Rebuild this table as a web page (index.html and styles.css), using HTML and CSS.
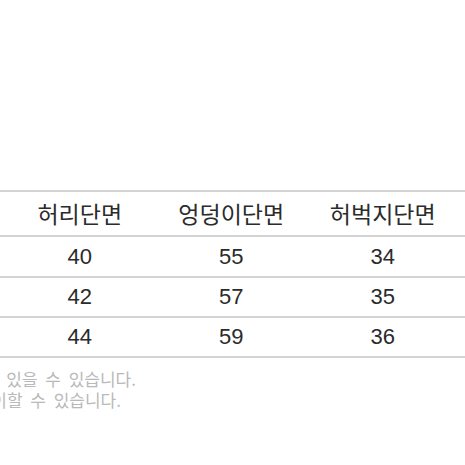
FILE: index.html
```html
<!DOCTYPE html>
<html lang="ko">
<head>
<meta charset="utf-8">
<title>사이즈표</title>
<link rel="stylesheet" href="styles.css">
</head>
<body>
<div class="page">
  <div class="size-table">
    <div class="row head">
      <div class="cell">허리단면</div>
      <div class="cell">엉덩이단면</div>
      <div class="cell">허벅지단면</div>
    </div>
    <div class="row data first">
      <div class="cell">40</div>
      <div class="cell">55</div>
      <div class="cell">34</div>
    </div>
    <div class="row data">
      <div class="cell">42</div>
      <div class="cell">57</div>
      <div class="cell">35</div>
    </div>
    <div class="row data last">
      <div class="cell">44</div>
      <div class="cell">59</div>
      <div class="cell">36</div>
    </div>
  </div>
  <div class="notes">
    <div class="note n1"><span>측정 방법에 따라 1~3cm 오차가 있을 수 있습니다.</span></div>
    <div class="note n2"><span>모니터 환경에 따라 색상이 상이할 수 있습니다.</span></div>
  </div>
</div>
</body>
</html>
```

FILE: styles.css
```css
html, body {
  margin: 0;
  padding: 0;
  background: #ffffff;
  overflow: hidden;
}

.page {
  width: 465px;
  height: 465px;
  overflow: hidden;
  font-family: "Liberation Sans", "Noto Sans CJK KR", sans-serif;
}

.size-table {
  margin-top: 190px;
}

.row {
  display: grid;
  grid-template-columns: repeat(3, 151.5px);
  padding-left: 4px;
  border-top: 2px solid #d3d3d3;
  align-items: center;
}

.row.last {
  border-bottom: 2px solid #d3d3d3;
}

.cell {
  text-align: center;
  white-space: nowrap;
}

.head {
  height: 43px;
}

.head .cell {
  font-family: "Noto Sans CJK KR", sans-serif;
  font-size: 23px;
  color: #2b2b2b;
  line-height: 43px;
}

.data {
  height: 38px;
}

.data.first {
  height: 39px;
}

.data .cell {
  font-size: 22px;
  color: #2b2b2b;
  line-height: 38px;
}

.notes {
  margin-top: 10px;
}

.note {
  display: flex;
  justify-content: flex-end;
  white-space: nowrap;
  font-family: "Noto Sans CJK KR", sans-serif;
  font-size: 17px;
  line-height: 21px;
  word-spacing: 3px;
  color: #b9b9b9;
}

.n1 {
  width: 136px;
}

.n2 {
  width: 121px;
}
```
